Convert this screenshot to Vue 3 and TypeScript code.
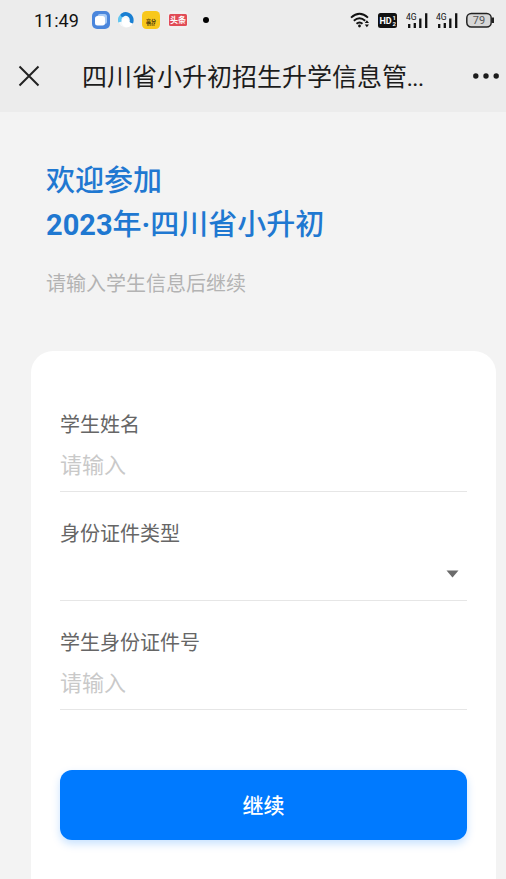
<script setup lang="ts">
import { reactive } from 'vue'

interface StudentForm {
  name: string
  idType: string
  idNumber: string
}

const form = reactive<StudentForm>({ name: '', idType: '', idNumber: '' })
const idTypes: string[] = ['居民身份证', '护照', '港澳居民来往内地通行证']
const signals: number[] = [1, 2]
</script>

<template>
  <div class="page">
    <header class="top">
      <div class="status">
        <time class="clock">11:49</time>
        <div class="apps">
          <svg width="18" height="18" viewBox="0 0 18 18" aria-hidden="true">
            <rect width="18" height="18" rx="5" fill="#4a86dc" />
            <rect x="5.500" y="3" width="9.500" height="10" rx="2.5" fill="#a9ccf6" />
            <rect x="3" y="5" width="10" height="9.5" rx="2.5" fill="#fff" />
          </svg>
          <svg width="16" height="18" viewBox="0 0 16 18" aria-hidden="true">
            <circle cx="8" cy="9" r="7.5" fill="#f5f8fa" />
            <path d="M2 11A6 6 0 0 1 5.500 3.600" fill="none" stroke="#62c5f0" stroke-width="3.6" />
            <path d="M4.500 4Q8 1.800 11 4Q14.500 6.500 13.500 11" fill="none" stroke="#197fd2" stroke-width="3.8" stroke-linecap="round" />
            <path d="M4 9Q7 5.500 10 8.500Q11 12 15 12.500Q12 17 7 16Q3 14 4 9Z" fill="#fff" />
          </svg>
          <svg width="18" height="18" viewBox="0 0 18 18" aria-hidden="true">
            <rect width="18" height="18" rx="4.500" fill="#f8c81c" />
            <text x="9" y="12" text-anchor="middle" font-size="5" font-weight="700" fill="#2b230a">高分</text>
            <path d="M5 14h8" stroke="#4c3e0c" stroke-width="1" stroke-dasharray="2 .4" />
          </svg>
          <svg width="20" height="18" viewBox="0 0 20 18" aria-hidden="true">
            <rect width="20" height="18" rx="4" fill="#f2f0f0" />
            <rect x="1" y="3" width="18" height="12" rx="1.5" fill="#e14b56" />
            <text x="10" y="12" text-anchor="middle" font-size="8" font-weight="700" fill="#fff">头条</text>
          </svg>
          <i class="dot"></i>
        </div>
        <div class="indicators">
          <svg width="20" height="18" viewBox="0 0 20 18" aria-hidden="true">
            <g fill="none" stroke="#111" stroke-width="1.900">
              <path d="M1 6.600Q9.500 -1 18 6.600" />
              <path d="M3.800 9.800Q9.500 4.800 15.200 9.800" />
              <path d="M6.500 12.800Q9.500 10 12.500 12.800" />
            </g>
            <circle cx="9.500" cy="15" r="1.400" fill="#111" />
            <path d="M14.800 12L16.900 9.300L19 12ZM14.800 13.600L16.900 16.300L19 13.600Z" fill="#111" />
          </svg>
          <svg width="20" height="18" viewBox="0 0 20 18" aria-hidden="true">
            <rect y="2" width="19" height="15" rx="2.500" fill="#111" />
            <text x="1.500" y="13" font-size="9" font-weight="700" fill="#fff">HD</text>
            <text x="14.500" y="9" font-size="6" font-weight="700" fill="#fff">1</text>
            <text x="14.500" y="15.200" font-size="6" font-weight="700" fill="#fff">2</text>
          </svg>
          <svg v-for="s in signals" :key="s" width="22" height="18" viewBox="0 0 22 18" aria-hidden="true">
            <text x="0" y="9" font-size="8.500" fill="#111">4G</text>
            <path d="M3.200 13v4M8.800 12v5M14.300 7.500v9.500M20.200 2.200v14.800" stroke="#111" stroke-width="2.300" />
          </svg>
          <svg width="28" height="18" viewBox="0 0 28 18" aria-hidden="true">
            <rect x=".8" y="2.500" width="24.400" height="13.600" rx="4.500" fill="#d7d7d7" stroke="#222" stroke-width="1.500" />
            <path d="M27 6.500v5.500" stroke="#222" stroke-width="2" />
            <text x="13" y="13.300" text-anchor="middle" font-size="11" fill="#555">79</text>
          </svg>
        </div>
      </div>
      <nav class="nav">
        <button class="icon-button" type="button" aria-label="关闭">
          <svg width="22" height="22" viewBox="0 0 22 22">
            <path d="M1.500 1.500L20.500 20.500M20.500 1.500L1.500 20.500" stroke="#222" stroke-width="2" />
          </svg>
        </button>
        <div class="title">四川省小升初招生升学信息管<span class="ellipsis">...</span></div>
        <button class="icon-button" type="button" aria-label="更多">
          <svg width="26" height="8" viewBox="0 0 26 8" fill="#1c1c1c">
            <circle cx="2.800" cy="4" r="2.700" />
            <circle cx="13" cy="4" r="2.700" />
            <circle cx="23.200" cy="4" r="2.700" />
          </svg>
        </button>
      </nav>
    </header>

    <main class="content">
      <section class="intro">
        <h1>欢迎参加<br /><b>2023</b>年<b>·</b>四川省小升初</h1>
        <p>请输入学生信息后继续</p>
      </section>

      <form class="card" @submit.prevent>
        <div class="field">
          <label for="name">学生姓名</label>
          <input id="name" v-model="form.name" type="text" placeholder="请输入" />
        </div>
        <div class="field">
          <label for="id-type">身份证件类型</label>
          <div class="select">
            <select id="id-type" v-model="form.idType">
              <option value=""></option>
              <option v-for="t in idTypes" :key="t" :value="t">{{ t }}</option>
            </select>
            <svg class="caret" width="13" height="8" viewBox="0 0 13 8" aria-hidden="true">
              <path d="M.5 .5h12L6.500 7.500Z" fill="#6b6b6b" />
            </svg>
          </div>
        </div>
        <div class="field">
          <label for="id-number">学生身份证件号</label>
          <input id="id-number" v-model="form.idNumber" type="text" placeholder="请输入" />
        </div>
        <button class="submit" type="submit">继续</button>
      </form>
    </main>
  </div>
</template>

<style>
body {
  margin: 0;
  background: #f3f3f3;
}
</style>

<style scoped>
.page {
  display: flex;
  flex-direction: column;
  min-height: 100vh;
  font-family: Roboto, "Noto Sans CJK SC", sans-serif;
  background: #f3f3f3;
}

.page * {
  box-sizing: border-box;
}

svg {
  display: block;
  flex: none;
}

.top {
  background: #ececec;
}

.status {
  display: flex;
  align-items: center;
  height: 40px;
  padding: 0 12px 0 34px;
}

.clock {
  padding-top: 2px;
  font-size: 18px;
  line-height: 24px;
  color: #111;
}

.apps {
  display: flex;
  align-items: center;
  gap: 8px;
  margin-left: 13px;
}

.dot {
  width: 6px;
  height: 6px;
  margin-left: 7px;
  border-radius: 50%;
  background: #000;
}

.indicators {
  display: flex;
  align-items: center;
  gap: 8px;
  margin-left: auto;
}

.nav {
  display: flex;
  align-items: center;
  height: 72px;
  padding: 0 7px 0 18px;
}

.icon-button {
  display: flex;
  flex: none;
  padding: 0;
  border: 0;
  background: none;
}

.title {
  flex: 1;
  min-width: 0;
  padding: 4px 0 0 42px;
  overflow: hidden;
  font-size: 25px;
  line-height: 36px;
  white-space: nowrap;
  color: #1c1c1c;
}

.ellipsis {
  font-size: 20px;
  font-weight: 500;
}

.content {
  display: flex;
  flex: 1;
  flex-direction: column;
}

.intro {
  padding: 47px 46px 51px;
}

h1 {
  margin: 0;
  font-size: 29px;
  font-weight: 500;
  line-height: 44px;
  color: #1f78d1;
}

h1 b {
  font-weight: 700;
}

p {
  margin: 22px 0 0;
  font-size: 20px;
  line-height: 31px;
  color: #b3b3b3;
}

.card {
  flex: 1;
  margin: 0 10px 0 31px;
  padding: 60px 29px 38px;
  border-radius: 22px 22px 0 0;
  background: #fff;
}

.field {
  display: flex;
  flex-direction: column;
  margin-bottom: 28px;
  border-bottom: 1px solid #e6e6e6;
}

label {
  font-size: 20px;
  line-height: 28px;
  color: #666;
}

input,
select {
  width: 100%;
  height: 52px;
  padding: 0;
  border: 0;
  outline: 0;
  appearance: none;
  font-family: inherit;
  font-size: 22px;
  color: #333;
  background: transparent;
}

input::placeholder {
  color: #c9c9c9;
  opacity: 1;
}

.select {
  position: relative;
}

.caret {
  position: absolute;
  top: 22px;
  right: 8px;
  pointer-events: none;
}

.submit {
  display: block;
  width: 100%;
  height: 70px;
  margin-top: 60px;
  padding: 0 0 2px;
  border: 0;
  border-radius: 12px;
  font-family: inherit;
  font-size: 21px;
  font-weight: 500;
  color: #fff;
  background: #007aff;
  box-shadow: 0 4px 8px rgba(0, 122, 255, 0.22);
}
</style>
